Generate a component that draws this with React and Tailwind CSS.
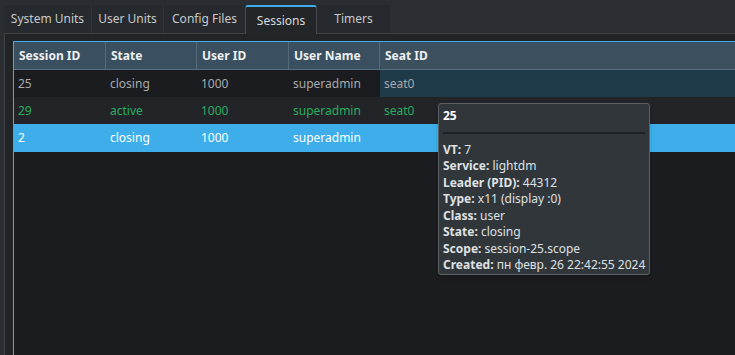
import React from "react";

const tabs = [
  { label: "System Units", w: "w-[88px]" },
  { label: "User Units", w: "w-[72px]" },
  { label: "Config Files", w: "w-[81px]" },
  { label: "Sessions", w: "w-[72px]", active: true },
  { label: "Timers", w: "w-[73px]" },
];

const columns = ["Session ID", "State", "User ID", "User Name", "Seat ID"];

const rows = [
  { id: "25", state: "closing", uid: "1000", name: "superadmin", seat: "seat0", kind: "closing" },
  { id: "29", state: "active", uid: "1000", name: "superadmin", seat: "seat0", kind: "active" },
  { id: "2", state: "closing", uid: "1000", name: "superadmin", seat: "", kind: "selected" },
];

const details = [
  ["VT:", "7"],
  ["Service:", "lightdm"],
  ["Leader (PID):", "44312"],
  ["Type:", "x11 (display :0)"],
  ["Class:", "user"],
  ["State:", "closing"],
  ["Scope:", "session-25.scope"],
  ["Created:", "пн февр. 26 22:42:55 2024"],
];

const grid = "grid grid-cols-[92px_91px_92px_91px_1fr]";

function Tab({ tab, next }) {
  if (tab.active) {
    return (
      <div
        className={`${tab.w} h-[29px] flex items-center justify-center bg-[#232629] border-x border-[#464b50] rounded-t-[3px] border-t-2 border-t-[#3daee9] -mb-px relative z-10 text-[#d8dadc]`}
      >
        {tab.label}
      </div>
    );
  }
  return (
    <div
      className={`${tab.w} h-[28px] flex items-center justify-center text-[#c8cacc] ${
        next && !next.active ? "border-r border-[#2f3337]" : ""
      }`}
    >
      {tab.label}
    </div>
  );
}

function Row({ row }) {
  const bg =
    row.kind === "selected"
      ? "bg-[#3daee9] text-white"
      : row.kind === "active"
      ? "bg-[#232428] text-[#27ae60]"
      : "bg-[#1b1c20] text-[#a8aaac]";
  const h = row.kind === "selected" ? "h-[28px]" : "h-[27px]";
  const cells = [row.id, row.state, row.uid, row.name, row.seat];
  return (
    <div className={`${grid} ${bg} ${h}`}>
      {cells.map((c, i) => (
        <div
          key={i}
          className={`flex items-center pl-[4px] ${
            i === 4 && row.kind === "closing" ? "bg-[#1f3a48] pl-[3px]" : ""
          }`}
        >
          {c}
        </div>
      ))}
    </div>
  );
}

export default function App() {
  return (
    <div
      className="relative w-[735px] h-[355px] overflow-hidden bg-[#2a2e32] text-[12px] flex flex-col"
      style={{ fontFamily: "'Noto Sans', 'DejaVu Sans', sans-serif" }}
    >
      {/* tab bar */}
      <div className="pl-[4px] pt-[5px] flex">
        <div className="flex bg-[#26292d] rounded-tl-[3px] items-end">
          {tabs.map((t, i) => (
            <Tab key={t.label} tab={t} next={tabs[i + 1]} />
          ))}
        </div>
      </div>

      {/* pane */}
      <div className="flex-1 ml-[4px] border-l border-t border-[#3e4347] bg-[#222528] pl-[8px] pt-[7px] flex flex-col">
        <div className="flex-1 border-l border-t border-[#3daee9] bg-[#1b1c20] flex flex-col">
          <div className={`${grid} h-[28px] bg-[#3a4f5f] border-b border-[#587080] font-bold text-[#eef0f1]`}>
            {columns.map((c, i) => (
              <div
                key={c}
                className={`flex items-center pl-[5px] ${
                  i < 4 ? "border-r border-[#55697a]" : "bg-[#3c5060]"
                }`}
              >
                {c}
              </div>
            ))}
          </div>
          {rows.map((r) => (
            <Row key={r.id} row={r} />
          ))}
        </div>
      </div>

      {/* tooltip */}
      <div className="absolute left-[438px] top-[103px] w-[212px] h-[172px] bg-[#31363b] border border-[#5b6065] rounded-[3px] px-[4px] pt-[4px] text-[#dfe1e3] leading-[16.5px] shadow-md">
        <div className="font-bold text-white">25</div>
        <div className="mt-[7px] mb-[8px] h-[2px] bg-[#1e2124]" />
        {details.map(([k, v]) => (
          <div key={k} className="whitespace-nowrap">
            <span className="font-bold">{k}</span> {v}
          </div>
        ))}
      </div>
    </div>
  );
}
